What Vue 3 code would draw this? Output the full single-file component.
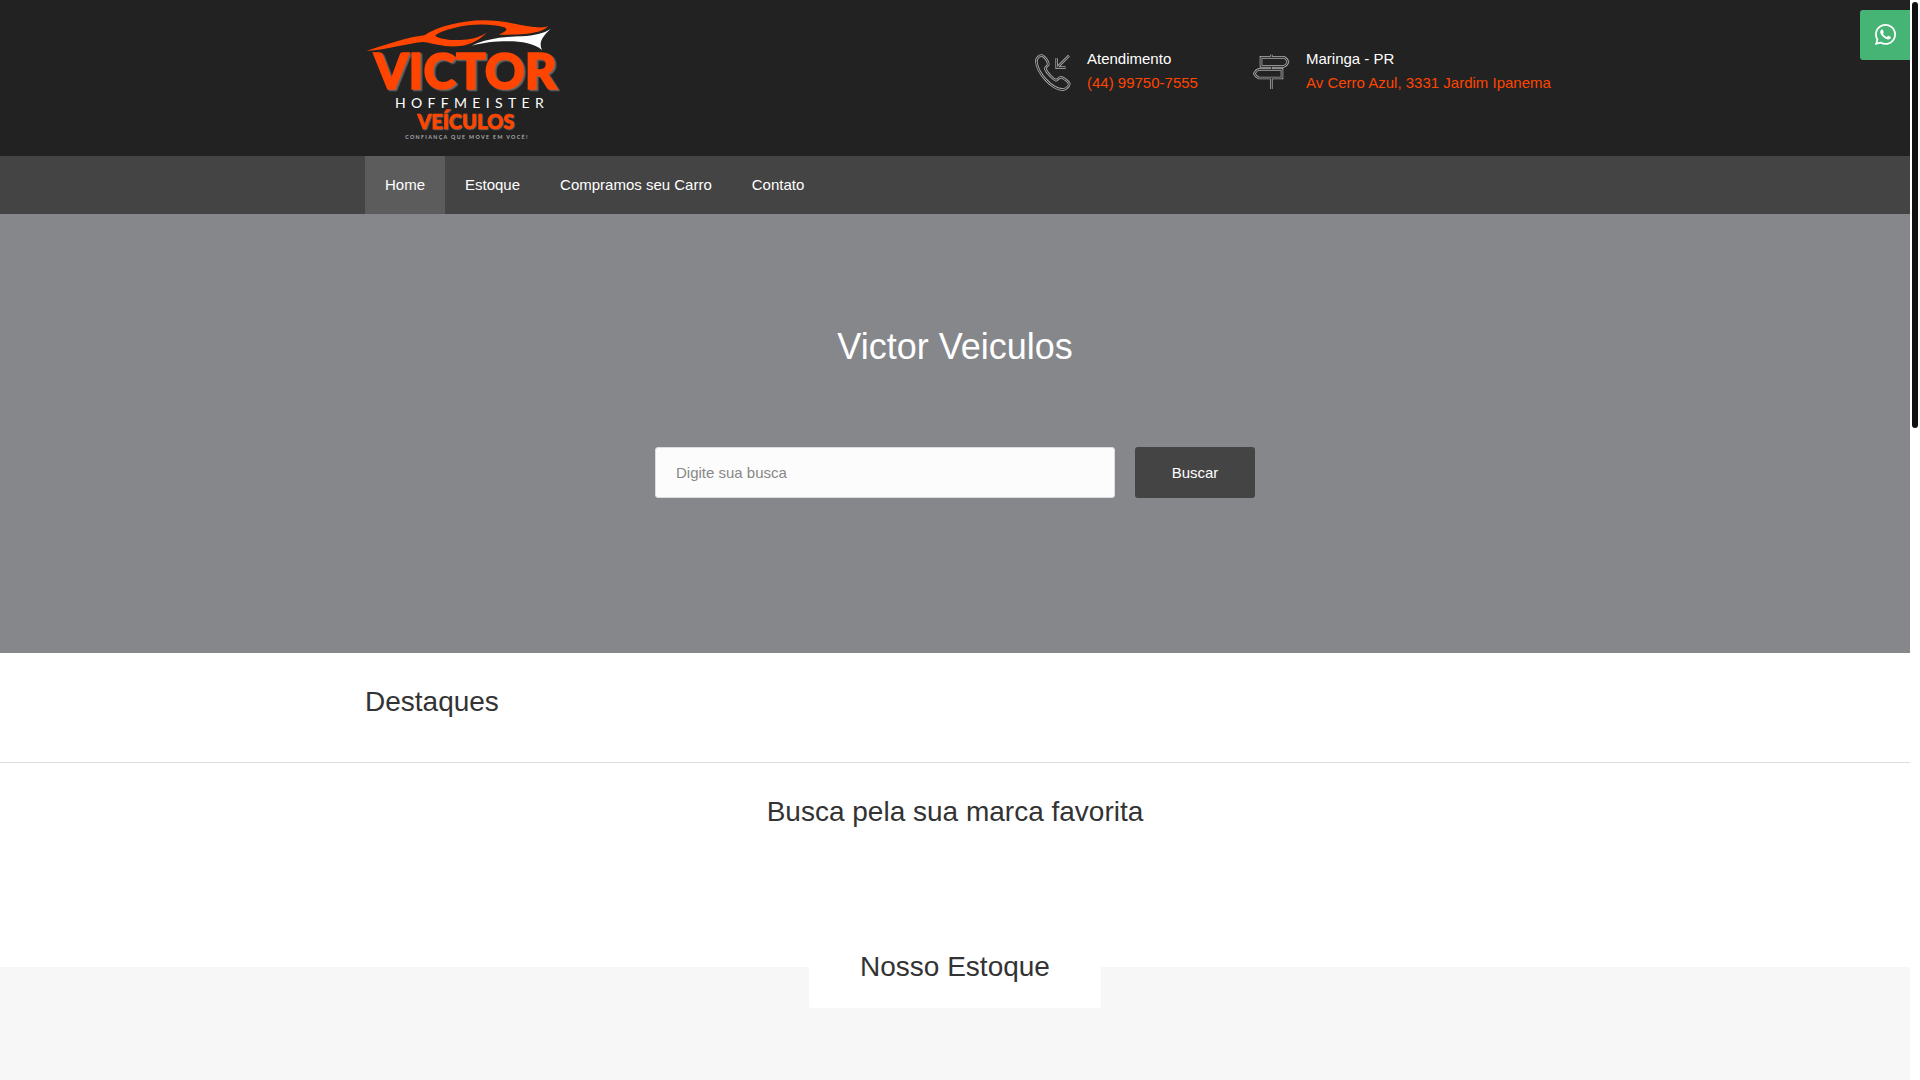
<template>
  <div class="layout">
    <div class="page">
      <header class="header">
        <div class="container header-inner">
          <a class="logo" href="#" aria-label="Victor Hoffmeister Veículos">
            <svg viewBox="30 15 585 390" width="195" height="130">
              <path
                fill="#ff4500"
                fill-rule="evenodd"
                d="M34 123 C100 102 155 82 208 76 C250 48 320 32 385 31 C440 31 480 42 520 49 C545 53 565 54 580 49 C560 66 530 76 432 74 C450 65 462 60 448 52 C405 40 345 42 300 53 C270 60 250 68 240 77 C260 91 310 93 345 87 C370 82 385 74 396 68 C375 87 350 104 315 108 C270 113 240 101 205 96 C160 99 100 119 34 123 Z"
              />
              <path
                fill="#fff"
                d="M350 107 C390 88 440 80 500 79 C540 77 565 70 587 57 C562 80 550 97 561 120 C540 101 500 94 460 94 C415 94 385 98 350 107 Z"
              />
              <g text-anchor="middle">
                <text class="logo-name" x="331" y="236">VICTOR</text>
                <text class="logo-family" x="351" y="294">HOFFMEISTER</text>
                <text class="logo-kind" x="333" y="356">VEÍCULOS</text>
                <text class="logo-motto" x="336" y="386">CONFIANÇA QUE MOVE EM VOCÊ!</text>
              </g>
            </svg>
          </a>

          <div class="contacts">
            <div class="contact">
              <svg class="contact-icon" viewBox="40 42 111 111" width="37" height="37">
                <g v-for="layer in layers" :key="layer" :class="layer">
                  <path
                    d="M65 47 C56 45 47 54 47 65 C49 85 60 103 76 120 C92 137 108 148 127 149 C136 147 144 140 146 132 C146 126 130 115 122 112 C115 111 112 119 106 121 C98 118 78 98 74 87 C74 80 83 78 83 72 C82 64 72 49 65 47 Z"
                  />
                  <path d="M145 47 L111 81 M108 55 V83 H135" />
                </g>
              </svg>
              <div>
                <p>Atendimento</p>
                <a href="tel:44997507555">(44) 99750-7555</a>
              </div>
            </div>
            <div class="contact">
              <svg class="contact-icon" viewBox="37 42 111 111" width="37" height="37">
                <g v-for="layer in layers" :key="layer" :class="layer">
                  <path d="M92 44 V52 M92 79 V88 M92 114 V147" />
                  <path d="M61 52 H130 Q137 54 142 66 Q137 77 130 79 H61 Z" />
                  <path d="M124 88 H54 Q46 91 41 101 Q46 111 54 114 H124 Z" />
                </g>
              </svg>
              <div>
                <p>Maringa - PR</p>
                <a href="#">Av Cerro Azul, 3331 Jardim Ipanema</a>
              </div>
            </div>
          </div>
        </div>
      </header>

      <nav class="nav">
        <ul class="container">
          <li v-for="item in menu" :key="item">
            <a href="#" :class="{ active: item === current }" @click.prevent="current = item">{{ item }}</a>
          </li>
        </ul>
      </nav>

      <section class="hero">
        <h1>Victor Veiculos</h1>
        <form class="search" @submit.prevent>
          <input v-model="query" type="text" placeholder="Digite sua busca" aria-label="Digite sua busca" />
          <button type="submit">Buscar</button>
        </form>
      </section>

      <section class="featured">
        <h2 class="container">Destaques</h2>
      </section>

      <section class="brands">
        <h2>Busca pela sua marca favorita</h2>
      </section>

      <section class="stock">
        <h2>Nosso Estoque</h2>
      </section>
    </div>

    <div class="rail"><div class="thumb"></div></div>

    <a class="whatsapp" href="#" aria-label="WhatsApp">
      <svg viewBox="0 32 448 448" width="21" height="21">
        <path
          fill="#fff"
          d="M380.9 97.1C339 55.1 283.2 32 223.9 32c-122.4 0-222 99.6-222 222 0 39.1 10.2 77.3 29.6 111L0 480l117.7-30.9c32.4 17.7 68.9 27 106.1 27h.1c122.3 0 224.1-99.6 224.1-222 0-59.3-25.2-115-67.1-157zm-157 341.6c-33.2 0-65.7-8.9-94-25.7l-6.7-4-69.8 18.3L72 359.2l-4.4-7c-18.5-29.4-28.2-63.3-28.2-98.2 0-101.7 82.8-184.5 184.6-184.5 49.3 0 95.6 19.2 130.4 54.1 34.8 34.9 56.2 81.2 56.1 130.5 0 101.8-84.9 184.6-186.6 184.6zm101.2-138.2c-5.5-2.8-32.8-16.2-37.9-18-5.1-1.9-8.8-2.8-12.5 2.8-3.7 5.6-14.3 18-17.6 21.8-3.2 3.7-6.5 4.2-12 1.4-32.6-16.3-54-29.1-75.5-66-5.7-9.8 5.7-9.1 16.3-30.3 1.8-3.7.9-6.9-.5-9.7-1.4-2.8-12.5-30.1-17.1-41.2-4.5-10.8-9.1-9.3-12.5-9.5-3.2-.2-6.9-.2-10.6-.2-3.7 0-9.7 1.4-14.8 6.9-5.1 5.6-19.4 19-19.4 46.3 0 27.3 19.9 53.7 22.6 57.4 2.8 3.7 39.1 59.7 94.8 83.8 35.2 15.2 49 16.5 66.6 13.9 10.7-1.6 32.8-13.4 37.4-26.4 4.6-13 4.6-24.1 3.2-26.4-1.3-2.5-5-3.9-10.5-6.6z"
        />
      </svg>
    </a>
  </div>
</template>

<script setup>
import { ref } from 'vue';

const menu = ['Home', 'Estoque', 'Compramos seu Carro', 'Contato'];
const current = ref('Home');
const query = ref('');

// a wide light stroke with a thin dark one on top gives the double outline
const layers = ['outer', 'inner'];
</script>

<style>
body {
  margin: 0;
  background: #fff;
}
</style>

<style scoped>
.layout {
  display: grid;
  grid-template-columns: 1fr 10px;
  min-height: 100vh;
  font-family: 'Liberation Sans', Arial, sans-serif;
  font-size: 15px;
  line-height: 24px;
  color: #333;
}

.page {
  display: flex;
  flex-direction: column;
}

.container {
  box-sizing: border-box;
  width: 100%;
  max-width: 1180px;
  margin: 0 auto;
}

a {
  text-decoration: none;
}

p,
h1,
h2 {
  margin: 0;
  font-weight: 400;
}

h2 {
  font-size: 28px;
  line-height: 36px;
}

.header {
  background: #222;
}

.header-inner {
  display: flex;
  justify-content: space-between;
  align-items: flex-start;
  padding: 15px 0 11px;
}

.logo svg {
  display: block;
}

.logo text {
  font-family: Lato, sans-serif;
  fill: #ff4500;
}

.logo .logo-name {
  font-size: 148px;
  font-weight: 900;
  stroke: #ff4500;
  stroke-width: 5px;
  filter: drop-shadow(5px 4px 0 #666);
}

.logo .logo-kind {
  font-size: 60px;
  font-weight: 900;
  stroke: #ff4500;
  stroke-width: 2px;
  filter: drop-shadow(2px 2px 0 #666);
}

.logo .logo-family {
  font-size: 42px;
  letter-spacing: 16px;
  fill: #fff;
}

.logo .logo-motto {
  font-size: 16px;
  font-weight: 700;
  letter-spacing: 4px;
  fill: #aaa;
}

.contacts {
  display: grid;
  grid-template-columns: 159px 292px;
  gap: 60px;
  padding-top: 32px;
  white-space: nowrap;
}

.contact {
  display: flex;
  gap: 16px;
  color: #fff;
}

.contact a {
  color: #ff4500;
}

.contact-icon {
  flex: none;
  margin-top: 7px;
  fill: none;
}

.outer {
  stroke: #a5a5a5;
  stroke-width: 8;
}

.inner {
  stroke: #222;
  stroke-width: 3;
}

.nav {
  background: #444;
}

.nav ul {
  display: flex;
  padding: 0;
  list-style: none;
}

.nav a {
  display: block;
  padding: 0 20px;
  line-height: 58px;
  color: #fff;
}

.nav a.active {
  background: #5c5c5c;
}

.hero {
  display: flex;
  flex-direction: column;
  align-items: center;
  gap: 79px;
  padding: 111px 20px 155px;
  background: #86878b;
}

.hero h1 {
  font-size: 36px;
  line-height: 43px;
  color: #fff;
}

.search {
  display: flex;
  gap: 20px;
  width: 100%;
  max-width: 600px;
}

.search input,
.search button {
  box-sizing: border-box;
  height: 51px;
  font: inherit;
  border-radius: 3px;
}

.search input {
  flex: 1;
  min-width: 0;
  padding: 0 20px;
  border: 1px solid #ddd;
  background: #fcfcfc;
  color: #444;
}

.search input::placeholder {
  color: #888;
}

.search button {
  width: 120px;
  border: 0;
  background: #444;
  color: #fff;
  cursor: pointer;
}

.featured {
  padding: 31px 0 42px;
  border-bottom: 1px solid #ddd;
}

.brands {
  padding: 31px 0 137px;
  text-align: center;
}

.stock {
  display: flex;
  flex: 1;
  justify-content: center;
  align-items: flex-start;
  background: #f7f7f7;
}

/* white tab that overlaps the section above */
.stock h2 {
  margin-top: -18px;
  padding: 0 51px 23px;
  border-radius: 3px;
  background: #fff;
}

.rail {
  padding: 2px;
  background: #fff;
}

.thumb {
  width: 6px;
  height: 426px;
  border-radius: 3px;
  background: #111;
}

.whatsapp {
  position: fixed;
  top: 10px;
  right: 10px;
  box-sizing: border-box;
  display: flex;
  justify-content: center;
  align-items: center;
  width: 50px;
  height: 50px;
  padding-bottom: 2px;
  border-radius: 3px 0 0 3px;
  background: #46b475;
}
</style>
